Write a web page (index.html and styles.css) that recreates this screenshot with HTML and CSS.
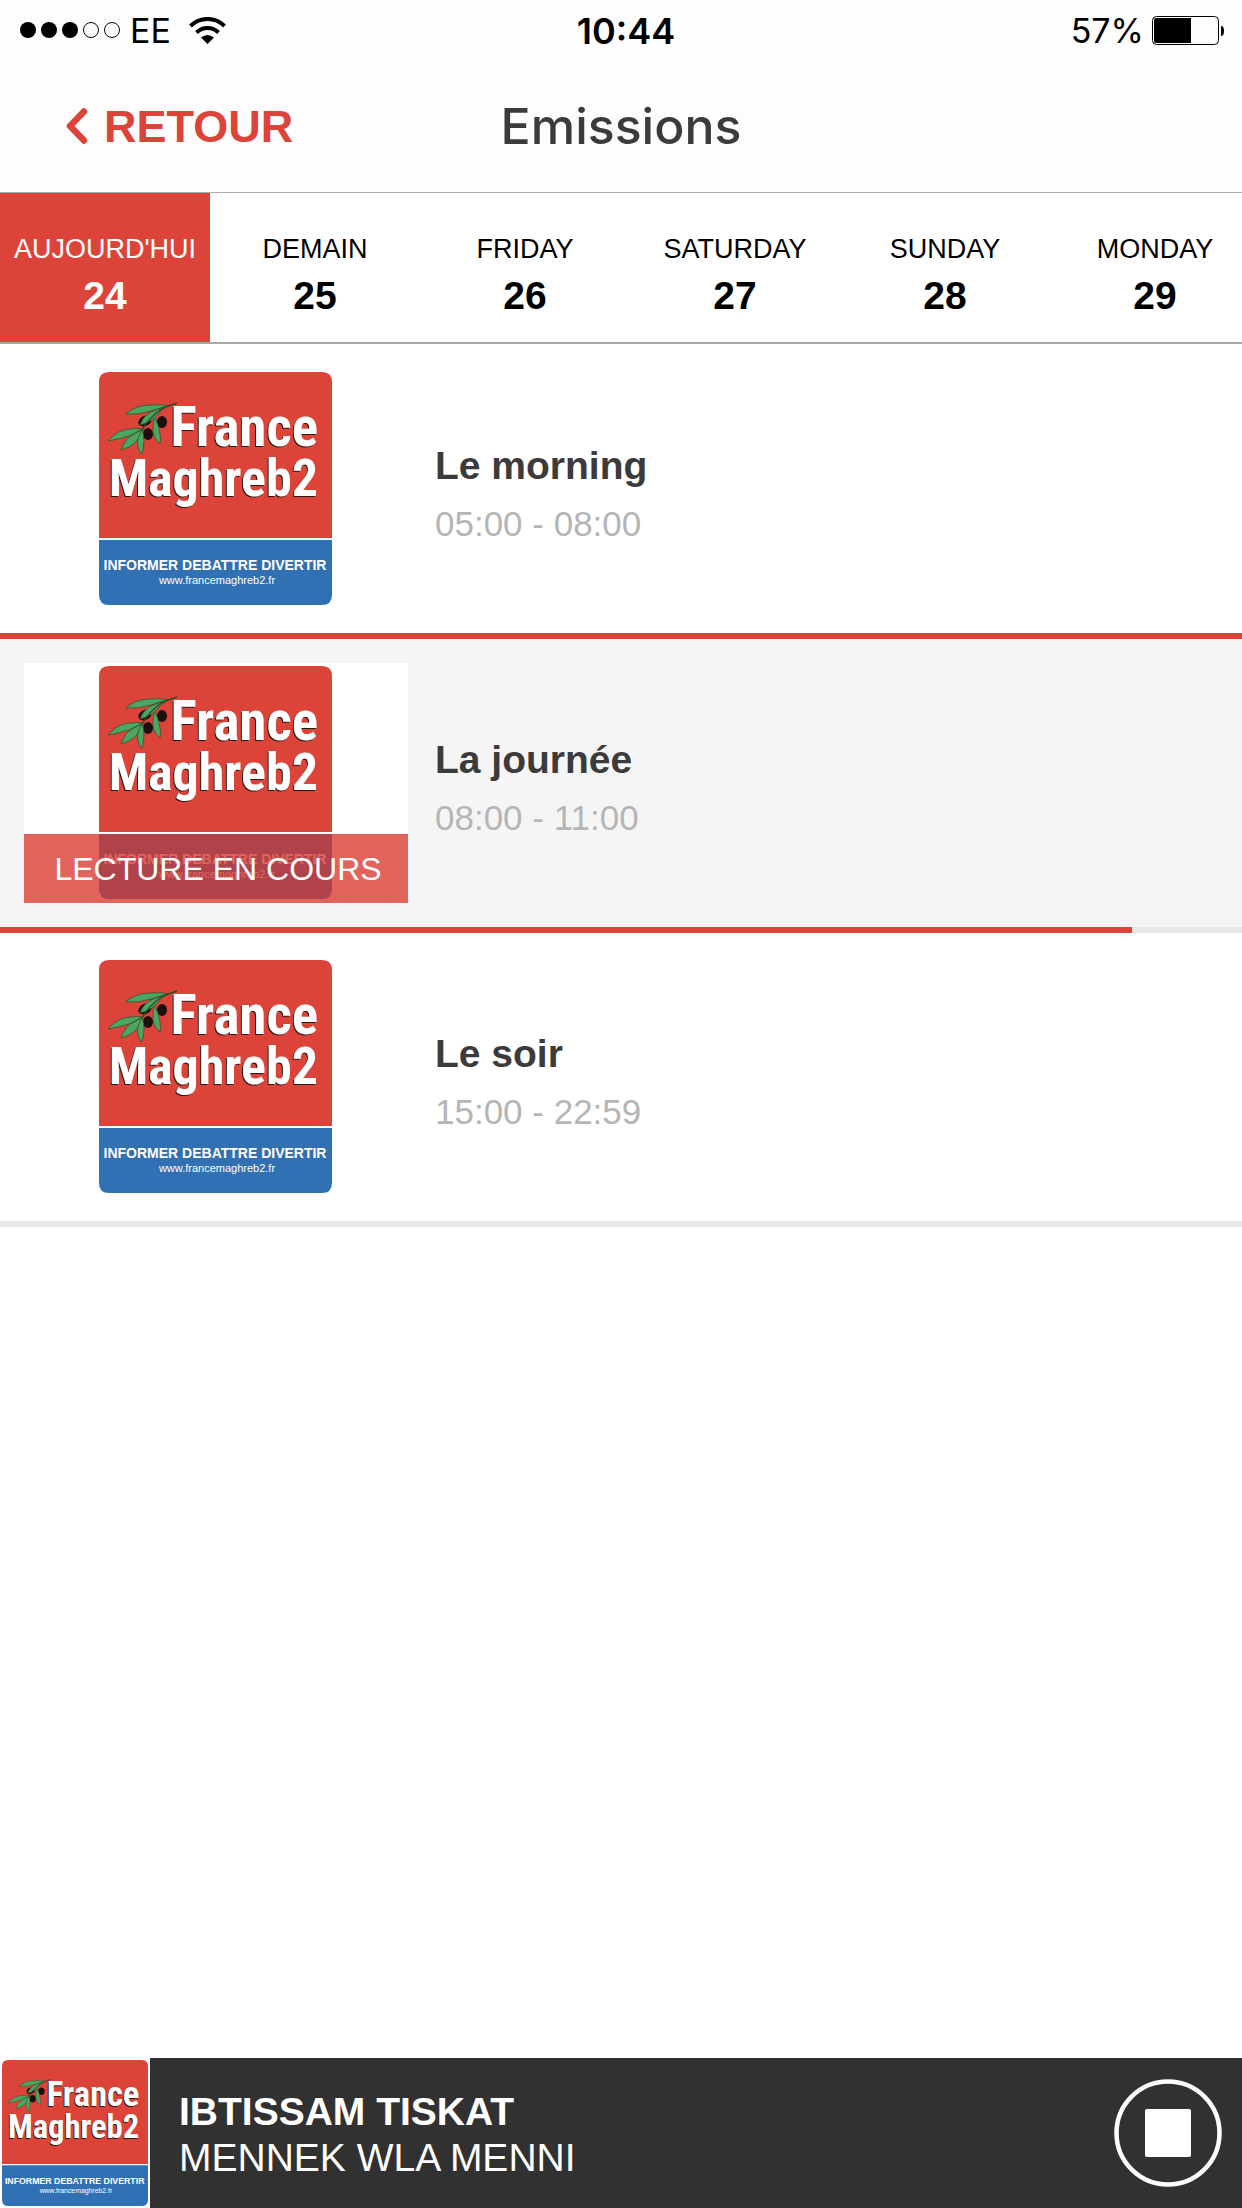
FILE: index.html
```html
<!DOCTYPE html>
<html lang="fr">
<head>
<meta charset="utf-8">
<meta name="viewport" content="width=device-width, initial-scale=1">
<title>Emissions</title>
<link rel="stylesheet" href="styles.css">
</head>
<body>
<svg class="defs" aria-hidden="true">
  <symbol id="olive" viewBox="0 0 233 233">
    <g fill="#1d0f10">
      <ellipse cx="63" cy="50" rx="5" ry="6"/>
      <ellipse cx="49" cy="62" rx="5" ry="6"/>
      <ellipse cx="46" cy="49" rx="7" ry="5" transform="rotate(-25 46 49)"/>
    </g>
    <g fill="#4aa660" stroke="#2b4a26" stroke-width=".7">
      <path d="M27 42Q36 33 52 33Q62 32 70 34Q60 36 52 39Q40 43 27 42Z"/>
      <path d="M9 69Q19 57 32 57Q38 56 43 57Q37 61 30 64Q21 67 9 69Z"/>
      <path d="M22 78Q26 66 35 62L44 57Q42 65 36 71Q30 76 22 78Z"/>
      <path d="M42 82Q36 72 40 64L43 57Q47 68 43 82Z"/>
      <path d="M61 72Q53 66 54 54L55 44Q60 53 61 62Q62 67 61 72Z"/>
      <path d="M41 53Q43 46 50 41L64 35Q60 43 53 48Q46 52 41 53Z"/>
    </g>
    <path d="M78 31Q68 34 61 38Q49 47 43 58" fill="none" stroke="#2b4a26" stroke-width="1.5"/>
  </symbol>
</svg>

<header class="header">
  <div class="status">
    <div class="status-side">
      <svg class="signal" width="100" height="16" viewBox="0 0 100 16" aria-hidden="true">
        <circle cx="8" cy="8" r="8"/><circle cx="29" cy="8" r="8"/><circle cx="50" cy="8" r="8"/>
        <circle cx="71" cy="8" r="7.5" fill="none" stroke="#000"/><circle cx="92" cy="8" r="7.5" fill="none" stroke="#000"/>
      </svg>
      <span class="carrier">EE</span>
      <svg width="37" height="27" viewBox="0 0 37 27" aria-hidden="true">
        <g fill="none" stroke="#000" stroke-width="4"><path d="M1.500 9A24 24 0 0 1 35.500 9"/><path d="M7.500 15.500A15.500 15.500 0 0 1 29.500 15.500"/></g>
        <path d="M12 20.500Q18.500 15.500 25 20.500L18.500 27Z"/>
      </svg>
    </div>
    <time class="clock">10:44</time>
    <div class="status-side status-right">
      <span class="percent">57%</span>
      <svg width="74" height="29" viewBox="0 0 74 29" aria-hidden="true">
        <rect x=".5" y=".5" width="66" height="28" rx="4" fill="none" stroke="#000"/>
        <path d="M4 2H39V27H4Q2 27 2 25V4Q2 2 4 2Z"/><path d="M69 10Q72 10 72 15T69 20Z"/>
      </svg>
    </div>
  </div>
  <div class="titlebar">
    <a class="back" href="#">
      <svg width="22" height="36" viewBox="0 0 22 36" aria-hidden="true"><path d="M18 3.500L4 18L18 32.500" fill="none" stroke="#dd4439" stroke-width="6.500" stroke-linecap="round" stroke-linejoin="round"/></svg>
      <span>RETOUR</span>
    </a>
    <h1 class="title">Emissions</h1>
  </div>
</header>

<nav class="days">
  <button class="day active" type="button"><span>AUJOURD'HUI</span><b>24</b></button>
  <button class="day" type="button"><span>DEMAIN</span><b>25</b></button>
  <button class="day" type="button"><span>FRIDAY</span><b>26</b></button>
  <button class="day" type="button"><span>SATURDAY</span><b>27</b></button>
  <button class="day" type="button"><span>SUNDAY</span><b>28</b></button>
  <button class="day" type="button"><span>MONDAY</span><b>29</b></button>
</nav>

<main class="shows">
  <article class="show">
    <div class="show-body">
      <div class="cover">
        <svg class="logo" viewBox="0 0 233 233" role="img" aria-label="France Maghreb2">
          <path fill="#dd4439" d="M10 0H223Q233 0 233 10V166H0V10Q0 0 10 0Z"/><path fill="#3270b4" d="M0 168H233V223Q233 233 223 233H10Q0 233 0 223Z"/>
          <use href="#olive"/>
          <text class="brand brand-top" x="219" y="74">France</text><text class="brand" x="219" y="124">Maghreb2</text>
          <text class="motto" x="116" y="198">INFORMER DEBATTRE DIVERTIR</text><text class="site" x="118" y="212">www.francemaghreb2.fr</text>
        </svg>
      </div>
      <div class="info"><h2>Le morning</h2><p>05:00 - 08:00</p></div>
    </div>
    <div class="progress"><div class="bar" style="width:100%"></div></div>
  </article>
  <article class="show current">
    <div class="show-body">
      <div class="cover">
        <svg class="logo" viewBox="0 0 233 233" role="img" aria-label="France Maghreb2">
          <path fill="#dd4439" d="M10 0H223Q233 0 233 10V166H0V10Q0 0 10 0Z"/><path fill="#3270b4" d="M0 168H233V223Q233 233 223 233H10Q0 233 0 223Z"/>
          <use href="#olive"/>
          <text class="brand brand-top" x="219" y="74">France</text><text class="brand" x="219" y="124">Maghreb2</text>
          <text class="motto" x="116" y="198">INFORMER DEBATTRE DIVERTIR</text><text class="site" x="118" y="212">www.francemaghreb2.fr</text>
        </svg>
        <div class="playing">LECTURE EN COURS</div>
      </div>
      <div class="info"><h2>La journée</h2><p>08:00 - 11:00</p></div>
    </div>
    <div class="progress"><div class="bar" style="width:91.150%"></div></div>
  </article>
  <article class="show">
    <div class="show-body">
      <div class="cover">
        <svg class="logo" viewBox="0 0 233 233" role="img" aria-label="France Maghreb2">
          <path fill="#dd4439" d="M10 0H223Q233 0 233 10V166H0V10Q0 0 10 0Z"/><path fill="#3270b4" d="M0 168H233V223Q233 233 223 233H10Q0 233 0 223Z"/>
          <use href="#olive"/>
          <text class="brand brand-top" x="219" y="74">France</text><text class="brand" x="219" y="124">Maghreb2</text>
          <text class="motto" x="116" y="198">INFORMER DEBATTRE DIVERTIR</text><text class="site" x="118" y="212">www.francemaghreb2.fr</text>
        </svg>
      </div>
      <div class="info"><h2>Le soir</h2><p>15:00 - 22:59</p></div>
    </div>
    <div class="progress"><div class="bar" style="width:0%"></div></div>
  </article>
</main>

<footer class="player">
  <div class="player-cover">
    <svg class="logo" viewBox="0 0 233 233" role="img" aria-label="France Maghreb2">
      <path fill="#dd4439" d="M10 0H223Q233 0 233 10V166H0V10Q0 0 10 0Z"/><path fill="#3270b4" d="M0 168H233V223Q233 233 223 233H10Q0 233 0 223Z"/>
      <use href="#olive"/>
      <text class="brand brand-top" x="219" y="74">France</text><text class="brand" x="219" y="124">Maghreb2</text>
      <text class="motto" x="116" y="198">INFORMER DEBATTRE DIVERTIR</text><text class="site" x="118" y="212">www.francemaghreb2.fr</text>
    </svg>
  </div>
  <div class="track"><strong>IBTISSAM TISKAT</strong><span>MENNEK WLA MENNI</span></div>
  <button class="stop" type="button" aria-label="Arrêter">
    <svg width="108" height="108" viewBox="0 0 108 108" aria-hidden="true">
      <circle cx="54" cy="54" r="51.500" fill="none" stroke="#fff" stroke-width="4.500"/><rect x="31" y="30" width="46" height="48" rx="2" fill="#fff"/>
    </svg>
  </button>
</footer>
</body>
</html>
```
FILE: styles.css
```css
* { box-sizing: border-box; }

body {
  margin: 0;
  min-height: 100vh;
  display: flex;
  flex-direction: column;
  background: #fff;
  color: #000;
  font-family: "Liberation Sans", Arial, sans-serif;
}

h1, h2, p { margin: 0; }

button {
  border: 0;
  padding: 0;
  background: none;
  color: inherit;
  font: inherit;
}

svg { display: block; flex: none; }

.defs { display: none; }

.header {
  background: #fdfdfd;
  border-bottom: 1px solid #acacac;
}

.status {
  display: grid;
  grid-template-columns: 1fr auto 1fr;
  align-items: center;
  height: 60px;
  padding: 0 16px 0 20px;
  font: 34px/40px Inter, sans-serif;
}

.status-side {
  display: flex;
  align-items: center;
  gap: 10px;
}

.status-right {
  justify-content: flex-end;
  gap: 8px;
}

.carrier, .percent, .clock { padding-top: 2px; }

.carrier { padding-right: 8px; }

.clock {
  padding-left: 6px;
  font-size: 36px;
  font-weight: 600;
}

.titlebar {
  display: grid;
  grid-template-columns: 1fr auto 1fr;
  align-items: center;
  height: 132px;
  padding: 0 66px;
}

.back {
  display: flex;
  align-items: center;
  gap: 16px;
  color: #dd4439;
  font-size: 45px;
  font-weight: 700;
  line-height: 52px;
  text-decoration: none;
}

.back span { padding-top: 2px; }

.title {
  color: #3b3b3b;
  font: 500 50px/60px Inter, sans-serif;
}

.days {
  display: grid;
  grid-template-columns: repeat(6, minmax(210px, 1fr));
  overflow: hidden;
  border-bottom: 2px solid #a8a8a8;
}

.day {
  padding: 40px 0 16px;
  text-align: center;
}

.day span, .day b { display: block; }

.day span { font-size: 27px; line-height: 32px; }

.day b { font-size: 39px; line-height: 61px; }

.active { background: #dd4439; color: #fff; }

.shows { flex: 1; padding-top: 1px; }

.show-body {
  display: flex;
  gap: 27px;
  padding: 24px;
}

.cover {
  position: relative;
  display: flex;
  align-items: flex-start;
  justify-content: center;
  width: 384px;
  height: 240px;
  padding: 3px 1px 0 0;
  background: #fff;
}

.cover .logo { width: 233px; }

.brand, .motto { font-weight: 700; }

.brand {
  fill: #fff;
  font-family: "Roboto Condensed", "Liberation Sans Narrow", "Liberation Sans", sans-serif;
  font-size: 52px;
  text-anchor: end;
  text-shadow: -1px 1px 0 #241a1a;
}

.brand-top { font-size: 55px; }

.motto, .site { fill: #fff; text-anchor: middle; }

.motto { font-size: 14px; }

.site { font-size: 11px; }

.playing {
  position: absolute;
  inset: auto 0 0;
  padding: 1px 0 0 4px;
  background: rgba(215, 51, 41, .76);
  color: #fff;
  font-size: 32px;
  line-height: 68px;
  text-align: center;
}

.info { padding-top: 73px; }

.info h2 {
  color: #3b3b3b;
  font-size: 39px;
  line-height: 48px;
}

.info p {
  padding-top: 10px;
  color: #b5b5b5;
  font-size: 35px;
  line-height: 48px;
}

.current { background: #f5f5f5; }

.progress { height: 6px; background: #e8e8e8; }

.bar { height: 6px; background: #dd4439; }

.player {
  display: flex;
  align-items: center;
  padding-right: 20px;
  background: #313131;
  color: #fff;
}

.player-cover { padding: 2px; background: #fff; }

.player-cover .logo { width: 146px; }

.track {
  flex: 1;
  display: flex;
  flex-direction: column;
  padding: 4px 0 0 29px;
  font-size: 39px;
  line-height: 46px;
}
```
